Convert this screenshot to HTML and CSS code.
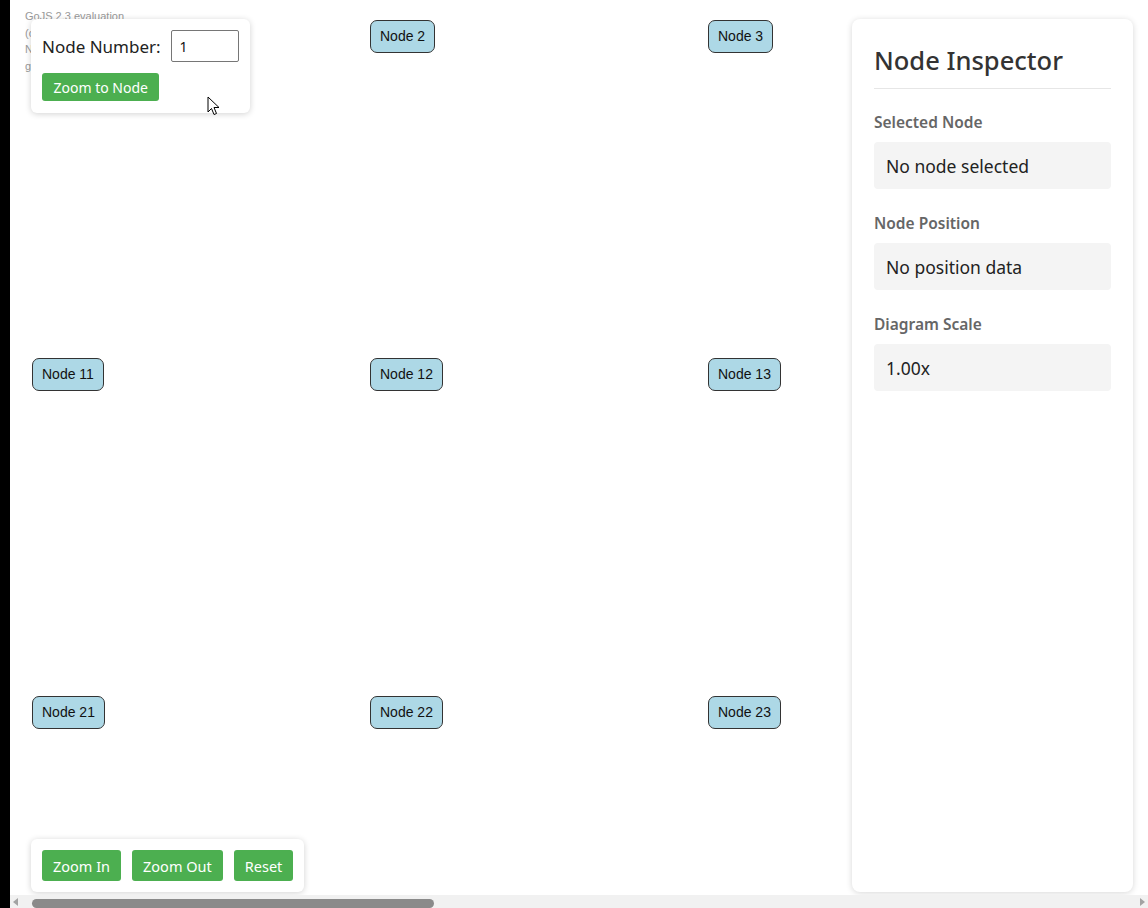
FILE: index.html
```html
<!DOCTYPE html>
<html>
<head>
<meta charset="utf-8">
<link rel="stylesheet" href="styles.css">
</head>
<body>
<div class="window">
  <div class="edge"></div>
  <div class="main">
    <div class="canvas">
      <div class="watermark">GoJS 2.3 evaluation<br>(c) 1998-2023 Northwoods Software<br>Not for distribution or production use<br>gojs.net</div>

      <div class="node" style="left:22px;top:20px">Node 1</div>
      <div class="node" style="left:360px;top:20px">Node 2</div>
      <div class="node" style="left:698px;top:20px">Node 3</div>
      <div class="node" style="left:22px;top:358px">Node 11</div>
      <div class="node" style="left:360px;top:358px">Node 12</div>
      <div class="node" style="left:698px;top:358px">Node 13</div>
      <div class="node" style="left:22px;top:696px">Node 21</div>
      <div class="node" style="left:360px;top:696px">Node 22</div>
      <div class="node" style="left:698px;top:696px">Node 23</div>

      <div class="card search">
        <div class="row">
          <label class="lbl">Node Number:</label>
          <input class="num" type="text" value="1">
        </div>
        <button class="btn btn-sm">Zoom to Node</button>
      </div>

      <div class="card zooms">
        <button class="btn">Zoom In</button>
        <button class="btn">Zoom Out</button>
        <button class="btn">Reset</button>
      </div>

      <aside class="inspector">
        <h2 class="title">Node Inspector</h2>
        <div class="field">
          <div class="flabel">Selected Node</div>
          <div class="fvalue">No node selected</div>
        </div>
        <div class="field">
          <div class="flabel">Node Position</div>
          <div class="fvalue">No position data</div>
        </div>
        <div class="field">
          <div class="flabel">Diagram Scale</div>
          <div class="fvalue">1.00x</div>
        </div>
      </aside>

      <svg class="cursor" width="14" height="20" viewBox="0 0 14 20">
        <path d="M1 1 L1 16 L4.5 12.5 L7 18.5 L9.5 17.5 L7 11.5 L12 11.5 Z" fill="#fff" stroke="#000" stroke-width="1" stroke-linejoin="round"/>
      </svg>
    </div>
    <div class="hscroll">
      <div class="arrow-l"></div>
      <div class="thumb"></div>
      <div class="spacer"></div>
      <div class="arrow-r"></div>
    </div>
  </div>
</div>
</body>
</html>
```

FILE: styles.css
```css
* { box-sizing: border-box; }
html, body { margin: 0; padding: 0; width: 1148px; height: 908px; overflow: hidden; background: #fff; }
body { font-family: "Noto Sans", "Open Sans", sans-serif; }

.window { display: flex; width: 1148px; height: 908px; }
.edge { width: 10px; background: #000; flex: none; }
.main { flex: 1; display: flex; flex-direction: column; min-width: 0; }
.canvas { position: relative; flex: 1; overflow: hidden; background: #fff; }

.watermark {
  position: absolute; left: 15px; top: 8px;
  font-family: "Liberation Sans", Arial, sans-serif;
  font-size: 11px; line-height: 16.5px; color: #999;
}

.node {
  position: absolute;
  height: 33px;
  padding: 0 9px 1px;
  display: flex; align-items: center;
  background: #add8e6;
  border: 1.5px solid #333;
  border-radius: 7px;
  font-family: "Liberation Sans", Arial, sans-serif;
  font-size: 14px; color: #111;
  white-space: nowrap;
}

.card {
  position: absolute;
  background: #fff;
  border-radius: 6px;
  box-shadow: 0 1px 6px rgba(0,0,0,0.18);
  padding: 11px;
}
.search { left: 21px; top: 19px; width: 219px; height: 94px; }
.search .row { display: flex; align-items: center; gap: 10px; }
.lbl { font-size: 17px; color: #222; }
.num {
  width: 68px; height: 32px;
  border: 1px solid #767676; border-radius: 2px;
  padding: 0 8px;
  font-family: "Noto Sans", sans-serif; font-size: 14px; color: #111;
}
.btn {
  border: none; border-radius: 3px;
  background: #4caf50; color: #fff;
  font-family: "Noto Sans", "Open Sans", sans-serif;
  font-size: 14.5px;
  height: 31px; padding: 0 11px;
}
.btn-sm { margin-top: 11px; height: 28px; font-size: 14px; padding: 0 11.5px; }

.zooms { left: 21px; top: 839px; display: flex; gap: 11px; }

.inspector {
  position: absolute; right: 15px; top: 19px; bottom: 3px;
  width: 281px;
  background: #fff;
  border-radius: 8px;
  box-shadow: 0 1px 6px rgba(0,0,0,0.16);
  padding: 22px 22px;
}
.title {
  margin: 0; font-size: 25.5px; font-weight: 500; color: #333;
  line-height: 38px;
  padding-bottom: 9px;
  border-bottom: 1px solid #e6e6e6;
  margin-bottom: 23px;
}
.field { margin-bottom: 24px; }
.flabel { font-size: 15.5px; font-weight: 600; color: #666; line-height: 20px; margin-bottom: 10px; }
.fvalue {
  background: #f4f4f4; border-radius: 4px;
  height: 47px; padding: 0 12px;
  display: flex; align-items: center;
  font-size: 17.5px; color: #222;
}

.cursor { position: absolute; left: 197px; top: 96px; }

.hscroll { height: 13px; flex: none; background: #f1f1f1; display: flex; align-items: center; position: relative; }
.arrow-l { width: 0; height: 0; margin-left: 3px; border-top: 4px solid transparent; border-bottom: 4px solid transparent; border-right: 5px solid #a3a3a3; }
.thumb { margin-left: 14px; width: 402px; height: 9px; border-radius: 5px; background: #8a8a8a; margin-top: 4px; }
.spacer { flex: 1; }
.arrow-r { width: 0; height: 0; margin-right: 3px; border-top: 4px solid transparent; border-bottom: 4px solid transparent; border-left: 5px solid #a3a3a3; }
```
